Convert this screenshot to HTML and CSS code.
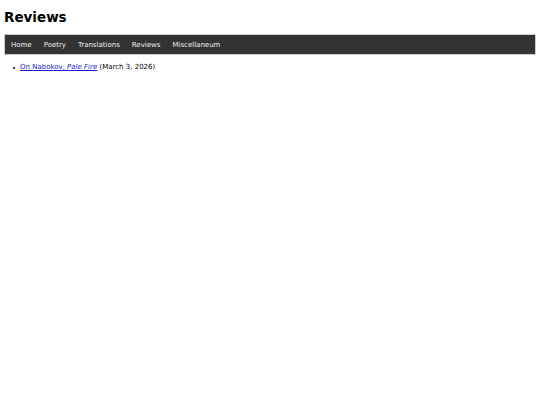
FILE: index.html
```html
<!DOCTYPE html>
<html>
<head>
<meta charset="utf-8">
<link rel="stylesheet" href="styles.css">
<title>Reviews</title>
</head>
<body>
<h1 class="title">Reviews</h1>
<nav class="nav">
  <a href="#">Home</a>
  <a href="#">Poetry</a>
  <a href="#">Translations</a>
  <a href="#">Reviews</a>
  <a href="#">Miscellaneum</a>
</nav>
<ul class="list">
  <li class="item"><span class="dot"></span><span><a class="link" href="#">On Nabokov, <em>Pale Fire</em></a> (March 3, 2026)</span></li>
</ul>
</body>
</html>
```
FILE: styles.css
```css
body {
  margin: 4px;
  font-family: "DejaVu Sans", Verdana, sans-serif;
  font-size: 7px;
  color: #000;
  background: #fff;
}
.title {
  font-size: 13.5px;
  font-weight: bold;
  margin: 5px 0 9px;
}
.nav {
  display: flex;
  background: #333;
  border: 1px solid #ccc;
  padding: 0 3px;
  height: 19px;
  align-items: center;
}
.nav a {
  color: #f0f0f0;
  text-decoration: none;
  padding: 0 3px;
  margin-right: 6px;
}
.list {
  list-style: none;
  margin: 8px 0;
  padding-left: 9px;
}
.item {
  display: flex;
  align-items: center;
}
.dot {
  width: 2px;
  height: 2px;
  border-radius: 50%;
  background: #000;
  margin-right: 5px;
  margin-top: 1px;
}
.link {
  color: #1a1acc;
}
```
